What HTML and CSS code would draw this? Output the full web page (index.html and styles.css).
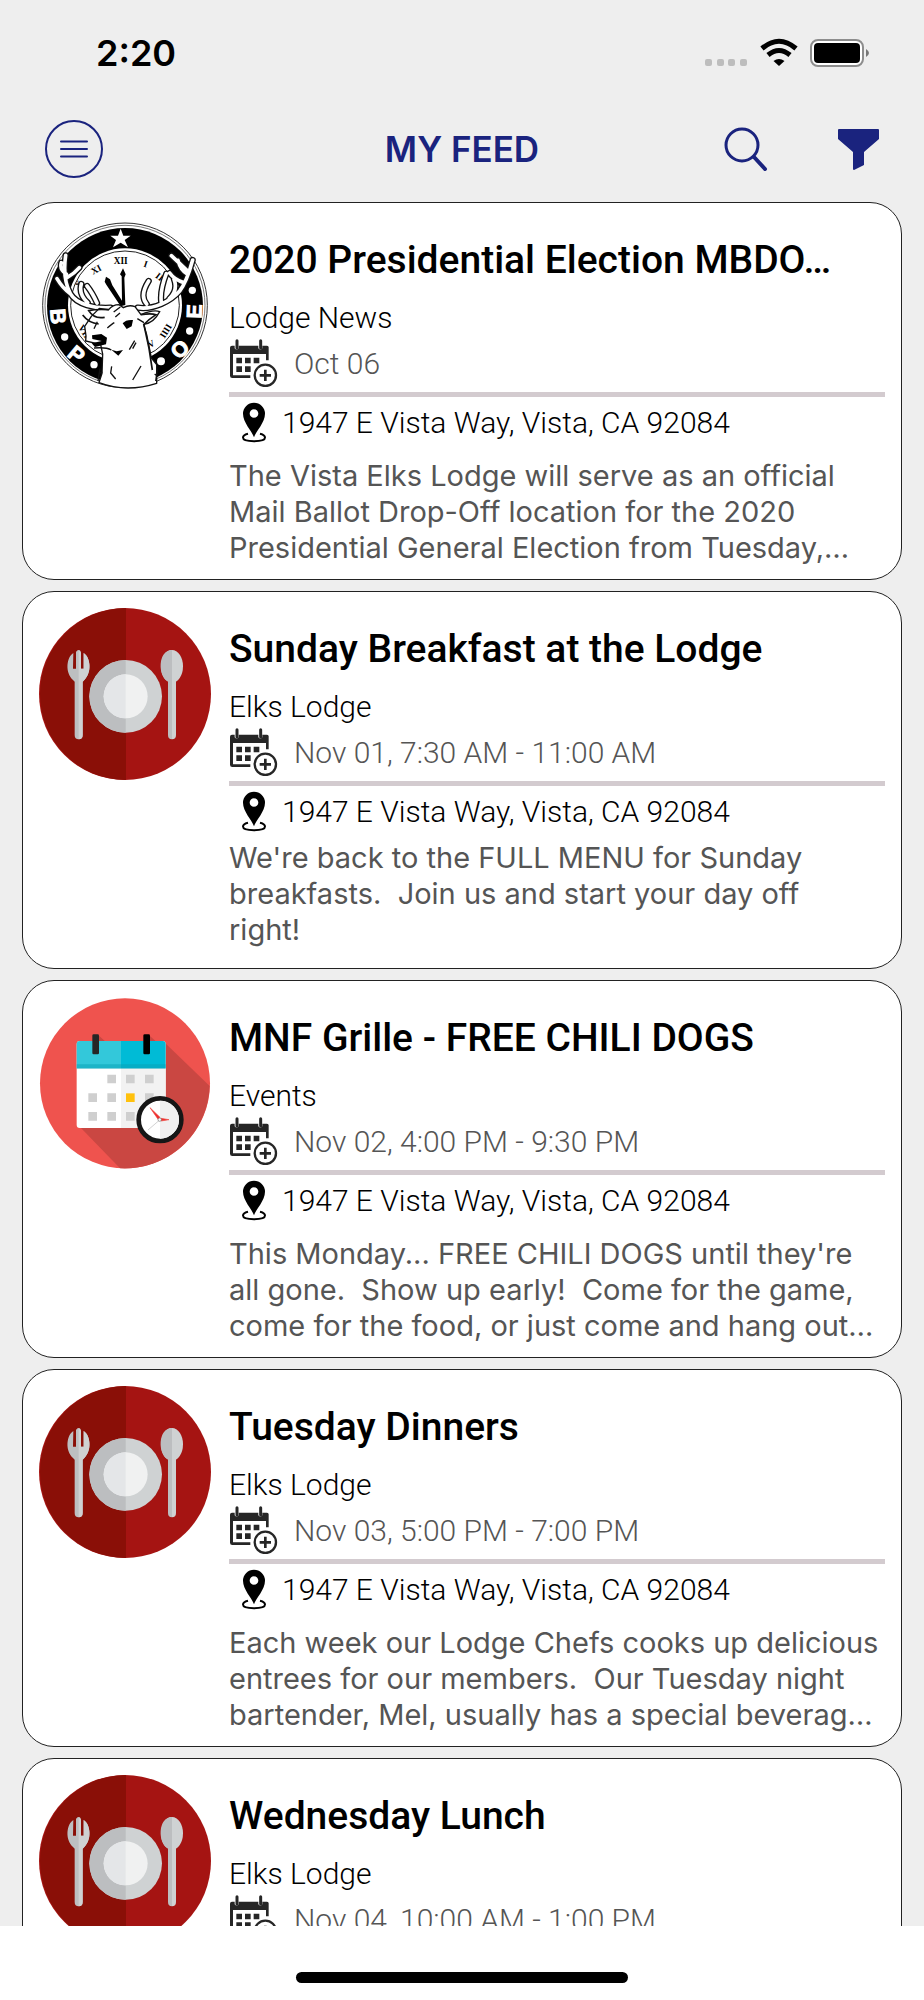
FILE: index.html
```html
<!DOCTYPE html>
<html lang="en">
<head>
<meta charset="utf-8">
<meta name="viewport" content="width=device-width, initial-scale=1">
<title>My Feed</title>
<link rel="stylesheet" href="styles.css">
</head>
<body>
<svg class="sprite" aria-hidden="true">
  <symbol id="calendar" viewBox="0 0 147 144">
    <path d="M4 20h13v8q6 7 12 0v-8h59v8q6 7 12 0v-8h14q5 0 5 5v39h-8V45H12v64h52v8H10q-7 0-7-7V26q0-6 6-6z" fill="#262626"/>
    <path d="M24 5v22M95 5v22" stroke="#262626" stroke-width="9" stroke-linecap="round"/>
    <path d="M22 56h17v17H22zM48 56h17v17H48zM74 56h17v17H74zM22 82h17v17H22zM48 82h17v17H48z" fill="#262626"/>
    <circle cx="109" cy="109" r="32" fill="#fff" stroke="#262626" stroke-width="7"/>
    <path d="M109 92v34M92 109h34" stroke="#262626" stroke-width="8"/>
  </symbol>
  <symbol id="pin" viewBox="0 0 72 120">
    <path d="M18 94C6 97 3 101 3 105c0 7 14 11 33 11s33-4 33-11c0-4-3-8-15-11" fill="none" stroke="#000" stroke-width="6"/>
    <path fill-rule="evenodd" d="M36 104C29 86 3 60 3 34a33 33 0 0 1 66 0c0 26-26 52-33 70zM36 20a13 13 0 1 0 0 26 13 13 0 0 0 0-26z"/>
  </symbol>
  <symbol id="dining" viewBox="57 84 516 516">
    <circle cx="315" cy="342" r="258" fill="#a51412"/>
    <path d="M318 84a258 258 0 0 0 0 516z" fill="#8a0f07"/>
    <circle cx="317" cy="349" r="109" fill="#cfd2d3"/>
    <path d="M317 240a109 109 0 0 0 0 218z" fill="#bcbec0"/>
    <circle cx="317" cy="349" r="66" fill="#f0f1f1"/>
    <path d="M317 283a66 66 0 0 0 0 132z" fill="#e4e6e8"/>
    <path d="M160 219c-20 12-26 58-1 81l5 5v160q0 13 12 13t12-13V305l5-5c24-23 18-69-2-81v47h-9v-50q-7-12-14 0v50h-9z" fill="#bdbfc1"/>
    <path d="M176 210q6 0 7 8v48h8v-47c20 12 26 58 2 81l-5 5v160q0 13-12 13z" fill="#cfd1d2"/>
    <ellipse cx="456" cy="259" rx="33" ry="49" fill="#cfd2d3"/>
    <path d="M456 210c-43 0-43 80-12 94v161q0 13 12 13z" fill="#bcbec0"/>
    <path d="M456 300h12v165q0 13-12 13z" fill="#cfd2d3"/>
  </symbol>
  <symbol id="event" viewBox="57 81 516 516">
    <circle cx="315" cy="340" r="255" fill="#ef534e"/>
    <path d="M436 220L569 348A255 255 0 0 1 300 595L180 471z" fill="#ca4742"/>
    <path d="M237 197l20 18h-20zM389 197l20 18h-20z" fill="#ca4742"/>
    <rect x="170" y="213" width="267" height="261" rx="9" fill="#fff"/>
    <path d="M303 290h134v175q0 9-9 9H303z" fill="#f2f2f2"/>
    <path d="M170 295v-73q0-9 9-9h124v82z" fill="#33c8da"/>
    <path d="M303 213h125q9 0 9 9v73H303z" fill="#00bbd6"/>
    <path d="M170 283h267v13H170z" fill="#0a9fb4" opacity=".5"/>
    <rect x="217" y="193" width="20" height="60" rx="4" fill="#262626"/>
    <rect x="370" y="193" width="20" height="60" rx="4"/>
    <path d="M262 314h26v26h-26zM318 314h26v26h-26zM375 314h26v26h-26zM205 370h26v26h-26zM262 370h26v26h-26zM375 370h26v26h-26zM205 426h26v26h-26zM262 426h26v26h-26zM318 426h26v26h-26z" fill="#cfcfcf"/>
    <path d="M318 370h26v26h-26z" fill="#ffc10d"/>
    <circle cx="420" cy="449" r="64" fill="#fff" stroke="#161616" stroke-width="14"/>
    <path d="M420 392a57 57 0 0 1 0 114z" fill="#f0f0f0"/>
    <path d="M420 449l-36 31" stroke="#bbb" stroke-width="2"/>
    <path d="M390 413l30 29-5 7zM423 445l24 4-24 4z" fill="#ef2b2b" stroke="#ef4b44" stroke-width="2"/>
    <circle cx="419" cy="449" r="5" fill="#fff" stroke="#777" stroke-width="2"/>
  </symbol>
</svg>

<div class="app">
  <header class="top">
    <div class="status">
      <time class="clock">2:20</time>
      <svg class="status-icons" viewBox="0 0 168 30" aria-label="Wi-Fi on, battery full" role="img">
        <g fill="#bdbdbd"><rect x="1" y="21" width="7" height="7" rx="2"/><rect x="13" y="21" width="7" height="7" rx="2"/><rect x="24" y="21" width="7" height="7" rx="2"/><rect x="36" y="21" width="7" height="7" rx="2"/></g>
        <g fill="none" stroke="#000" stroke-width="5"><path d="M58 10.500q17-14.500 34 0"/><path d="M64 17q11-9 22 0"/></g>
        <path d="M69.500 23q5.500-4 11 0L75 28z"/>
        <rect x="107" y="2" width="52" height="26" rx="7" fill="#fff" stroke="#8d8d8d" stroke-width="2"/>
        <rect x="110" y="5" width="46" height="20" rx="4"/>
        <path d="M162 11q6 4 0 8z" fill="#777"/>
      </svg>
    </div>
    <nav class="bar">
      <button class="icon-button menu" type="button" aria-label="Menu">
        <svg viewBox="0 0 58 58" fill="none" stroke="currentColor" stroke-width="2" stroke-linecap="round"><circle cx="29" cy="29" r="28"/><path d="M16 21.500h26M16 29h26M16 36.500h26"/></svg>
      </button>
      <h1 class="heading">MY FEED</h1>
      <div class="actions">
        <button class="icon-button search" type="button" aria-label="Search">
          <svg viewBox="0 0 44 44" fill="none" stroke="currentColor" stroke-linecap="round"><circle cx="18" cy="18" r="16" stroke-width="3"/><path d="M30 30l11 12" stroke-width="4"/></svg>
        </button>
        <button class="icon-button filter" type="button" aria-label="Filter">
          <svg viewBox="0 0 41 41" fill="currentColor"><path d="M1 0h39q1 0 1 1v9L26 23v13l-10 5q-1 0-1-1V23L0 10V1q0-1 1-1z"/></svg>
        </button>
      </div>
    </nav>
  </header>

  <main class="feed">
    <article class="card">
      <svg class="thumb" viewBox="57 57 516 516" role="img" aria-label="BPOE emblem">
        <g fill="none" stroke="#333" stroke-width="2">
          <circle cx="315" cy="316" r="247" fill="#fff" stroke-width="3"/>
          <circle cx="315" cy="316" r="240"/>
        </g>
        <circle cx="315" cy="318" r="234"/>
        <circle cx="315" cy="316" r="171" fill="#fff"/>
        <circle cx="315" cy="316" r="163" fill="none" stroke="#222" stroke-width="3"/>
        <path d="M302 86l8 21h22l-18 13 10 22-22-14-23 14 9-22-17-13h23z" fill="#fff"/>
        <g class="emblem-numerals">
          <text x="302" y="193" text-anchor="middle">XII</text>
          <text transform="translate(233 217) rotate(-28)" text-anchor="middle">XI</text>
          <text transform="translate(374 201) rotate(18)" text-anchor="middle">I</text>
          <text transform="translate(413 238) rotate(38)" text-anchor="middle">II</text>
          <text transform="translate(185 258) rotate(-58)" text-anchor="middle">X</text>
          <text transform="translate(188 404) rotate(58)" text-anchor="middle">VIII</text>
          <text transform="translate(445 398) rotate(-58)" text-anchor="middle">IIII</text>
          <text transform="translate(398 440) rotate(-30)" text-anchor="middle">V</text>
        </g>
        <g class="emblem-letters">
          <text transform="translate(92 351) rotate(86)" text-anchor="middle">B</text>
          <text transform="translate(155 480) rotate(40)" text-anchor="middle">P</text>
          <text transform="translate(494 465) rotate(-40)" text-anchor="middle">O</text>
          <text transform="translate(545 335) rotate(-88)" text-anchor="middle">E</text>
        </g>
        <g fill="#fff"><circle cx="134" cy="411" r="11"/><circle cx="222" cy="494" r="11"/><circle cx="423" cy="484" r="12"/><circle cx="509" cy="393" r="11"/><circle cx="517" cy="271" r="11"/></g>
        <path d="M258 230l12 8 7 18 29 46-1-73-5-6 9-18 8 18-4 10 3 82-14 4-43-65-5-9z"/>
        <g fill="none" stroke-linecap="round" stroke-linejoin="round">
          <path d="M272 323C225 326 170 314 151 281Q128 265 111 236M151 281Q127 236 137 166M139 222Q118 208 124 188M142 232Q164 220 178 203M203 308Q175 282 184 252M231 309Q217 278 201 258M353 323C400 330 452 304 479 273Q500 246 518 180M492 248Q463 239 449 219M502 222Q482 212 474 181M500 210Q475 187 454 167M380 312Q358 287 386 243M424 308Q419 273 439 221M448 296Q475 270 462 238" stroke="#111" stroke-width="19"/>
          <path d="M272 323C225 326 170 314 151 281Q128 265 111 236M151 281Q127 236 137 166M139 222Q118 208 124 188M142 232Q164 220 178 203M203 308Q175 282 184 252M231 309Q217 278 201 258M353 323C400 330 452 304 479 273Q500 246 518 180M492 248Q463 239 449 219M502 222Q482 212 474 181M500 210Q475 187 454 167M380 312Q358 287 386 243M424 308Q419 273 439 221M448 296Q475 270 462 238" stroke="#fff" stroke-width="11"/>
        </g>
        <path d="M266 329q12-15 31-15l13 9q18-10 35-3l18 24q37-16 56-9-18 35-48 38l9 31 14 70 16 20v56q-91 29-173-2l9-28 2-58-6-28-45-11 1-15-4-29 20-30 24-24z" fill="#fff" stroke="#111" stroke-width="4"/>
        <path d="M266 329q-39-2-60 3 16 26 48 20M188 345q18 24 48 27M363 344q30-5 45 0-19 12-38 31M372 375l15 70 10 65" fill="none" stroke="#111" stroke-width="5"/>
        <path d="M216 406l28-4 17 11-3 20-33 8-10-11 30-7-28-6zM274 449l16 5 19-4-14 17zM308 370q10-12 31-10l-4 19-15 8z"/>
        <path d="M222 444q37-3 52 6M262 384q14-12 21-16M281 336l20-15M286 351l14-12M328 449l16-27M338 446l10-18M275 499l-3 20 15 18M363 498l-25 42M372 368l-20-12M240 505l-6 38M412 508l-5 35M238 520l9-4M404 522l10 8M222 386l10-21" fill="none" stroke="#111" stroke-width="4"/>
      </svg>
      <div class="details">
        <h2 class="title">2020 Presidential Election MBDO…</h2>
        <p class="source">Lodge News</p>
        <p class="date"><svg class="calendar" aria-hidden="true"><use href="#calendar"/></svg>Oct 06</p>
        <p class="place"><svg class="pin" aria-hidden="true"><use href="#pin"/></svg>1947 E Vista Way, Vista, CA 92084</p>
        <p class="summary">The Vista Elks Lodge will serve as an official Mail Ballot Drop-Off location for the 2020 Presidential General Election from Tuesday,…</p>
      </div>
    </article>
    <article class="card">
      <svg class="thumb" aria-hidden="true"><use href="#dining"/></svg>
      <div class="details">
        <h2 class="title">Sunday Breakfast at the Lodge</h2>
        <p class="source">Elks Lodge</p>
        <p class="date"><svg class="calendar" aria-hidden="true"><use href="#calendar"/></svg>Nov 01, 7:30 AM - 11:00 AM</p>
        <p class="place"><svg class="pin" aria-hidden="true"><use href="#pin"/></svg>1947 E Vista Way, Vista, CA 92084</p>
        <p class="summary summary-full">We're back to the FULL MENU for Sunday breakfasts.&nbsp; Join us and start your day off<br>right!</p>
      </div>
    </article>
    <article class="card">
      <svg class="thumb" aria-hidden="true"><use href="#event"/></svg>
      <div class="details">
        <h2 class="title">MNF Grille - FREE CHILI DOGS</h2>
        <p class="source">Events</p>
        <p class="date"><svg class="calendar" aria-hidden="true"><use href="#calendar"/></svg>Nov 02, 4:00 PM - 9:30 PM</p>
        <p class="place"><svg class="pin" aria-hidden="true"><use href="#pin"/></svg>1947 E Vista Way, Vista, CA 92084</p>
        <p class="summary">This Monday... FREE CHILI DOGS until they're all gone.&nbsp; Show up early!&nbsp; Come for the game, come for the food, or just come and hang out…</p>
      </div>
    </article>
    <article class="card">
      <svg class="thumb" aria-hidden="true"><use href="#dining"/></svg>
      <div class="details">
        <h2 class="title">Tuesday Dinners</h2>
        <p class="source">Elks Lodge</p>
        <p class="date"><svg class="calendar" aria-hidden="true"><use href="#calendar"/></svg>Nov 03, 5:00 PM - 7:00 PM</p>
        <p class="place"><svg class="pin" aria-hidden="true"><use href="#pin"/></svg>1947 E Vista Way, Vista, CA 92084</p>
        <p class="summary">Each week our Lodge Chefs cooks up delicious entrees for our members.&nbsp; Our Tuesday night bartender, Mel, usually has a special beverag…</p>
      </div>
    </article>
    <article class="card">
      <svg class="thumb" aria-hidden="true"><use href="#dining"/></svg>
      <div class="details">
        <h2 class="title">Wednesday Lunch</h2>
        <p class="source">Elks Lodge</p>
        <p class="date"><svg class="calendar" aria-hidden="true"><use href="#calendar"/></svg>Nov 04, 10:00 AM - 1:00 PM</p>
      </div>
    </article>
  </main>

  <footer class="home"><span class="home-indicator"></span></footer>
</div>
</body>
</html>
```
FILE: styles.css
```css
* {
  box-sizing: border-box;
}

body {
  margin: 0;
  background: #fff;
  color: #000;
  font-family: Roboto, "Liberation Sans", sans-serif;
}

h1,
h2,
p {
  margin: 0;
}

.sprite {
  position: absolute;
  width: 0;
  height: 0;
}

.app {
  display: flex;
  flex-direction: column;
  height: 100vh;
}

.top {
  flex: none;
  background: #eee;
}

.status {
  display: flex;
  align-items: center;
  justify-content: space-between;
  padding: 31px 52px 0 96px;
}

.clock {
  font: 600 36px/44px Inter, sans-serif;
}

.status-icons {
  width: 168px;
  height: 30px;
}

.bar {
  display: grid;
  grid-template-columns: 1fr auto 1fr;
  align-items: center;
  padding: 45px 45px 24px;
  color: #1a237e;
}

.heading {
  font: 600 35px/58px Inter, sans-serif;
}

.icon-button {
  display: block;
  padding: 0;
  border: 0;
  background: none;
  color: inherit;
}

.icon-button svg {
  display: block;
  width: 100%;
}

.menu {
  width: 58px;
}

.actions {
  display: flex;
  align-items: center;
  justify-content: flex-end;
  gap: 70px;
}

.search {
  width: 44px;
}

.filter {
  width: 41px;
}

.feed {
  flex: 1;
  min-height: 0;
  overflow: hidden;
  display: flex;
  flex-direction: column;
  gap: 11px;
  padding: 0 22px;
  background: #eee;
}

.card {
  flex: none;
  display: flex;
  gap: 18px;
  min-height: 378px;
  padding: 16px 16px 12px;
  border: 1px solid #222;
  border-radius: 32px;
  background: #fff;
}

.thumb {
  flex: none;
  width: 172px;
  height: 172px;
}

.details {
  flex: 1;
  min-width: 0;
  padding-top: 18px;
}

.title {
  font-size: 39px;
  font-weight: 500;
  line-height: 46px;
  white-space: nowrap;
}

.source {
  padding: 16px 0 2px;
  font-size: 30px;
  font-weight: 300;
  line-height: 38px;
}

.date {
  display: flex;
  align-items: center;
  gap: 16px;
  padding-bottom: 5px;
  border-bottom: 5px solid #d3cbcf;
  color: #555;
  font-size: 30px;
  font-weight: 300;
}

.calendar {
  width: 49px;
  height: 48px;
}

.place {
  display: flex;
  align-items: center;
  gap: 16px;
  padding: 5px 0 0 13px;
  font-size: 30px;
  font-weight: 300;
}

.pin {
  width: 24px;
  height: 41px;
}

.summary {
  padding-top: 15px;
  color: #555;
  font: 400 29px/36px Inter, sans-serif;
}

.summary-full {
  padding-top: 8px;
}

.emblem-numerals {
  font: bold 28px "Liberation Serif", serif;
}

.emblem-letters {
  fill: #fff;
  stroke: #fff;
  stroke-width: 3px;
  font: bold 64px "Liberation Sans", sans-serif;
}

.home {
  flex: none;
  display: flex;
  justify-content: center;
  padding: 46px 0 17px;
}

.home-indicator {
  width: 36%;
  height: 11px;
  border-radius: 6px;
  background: #000;
}
```
